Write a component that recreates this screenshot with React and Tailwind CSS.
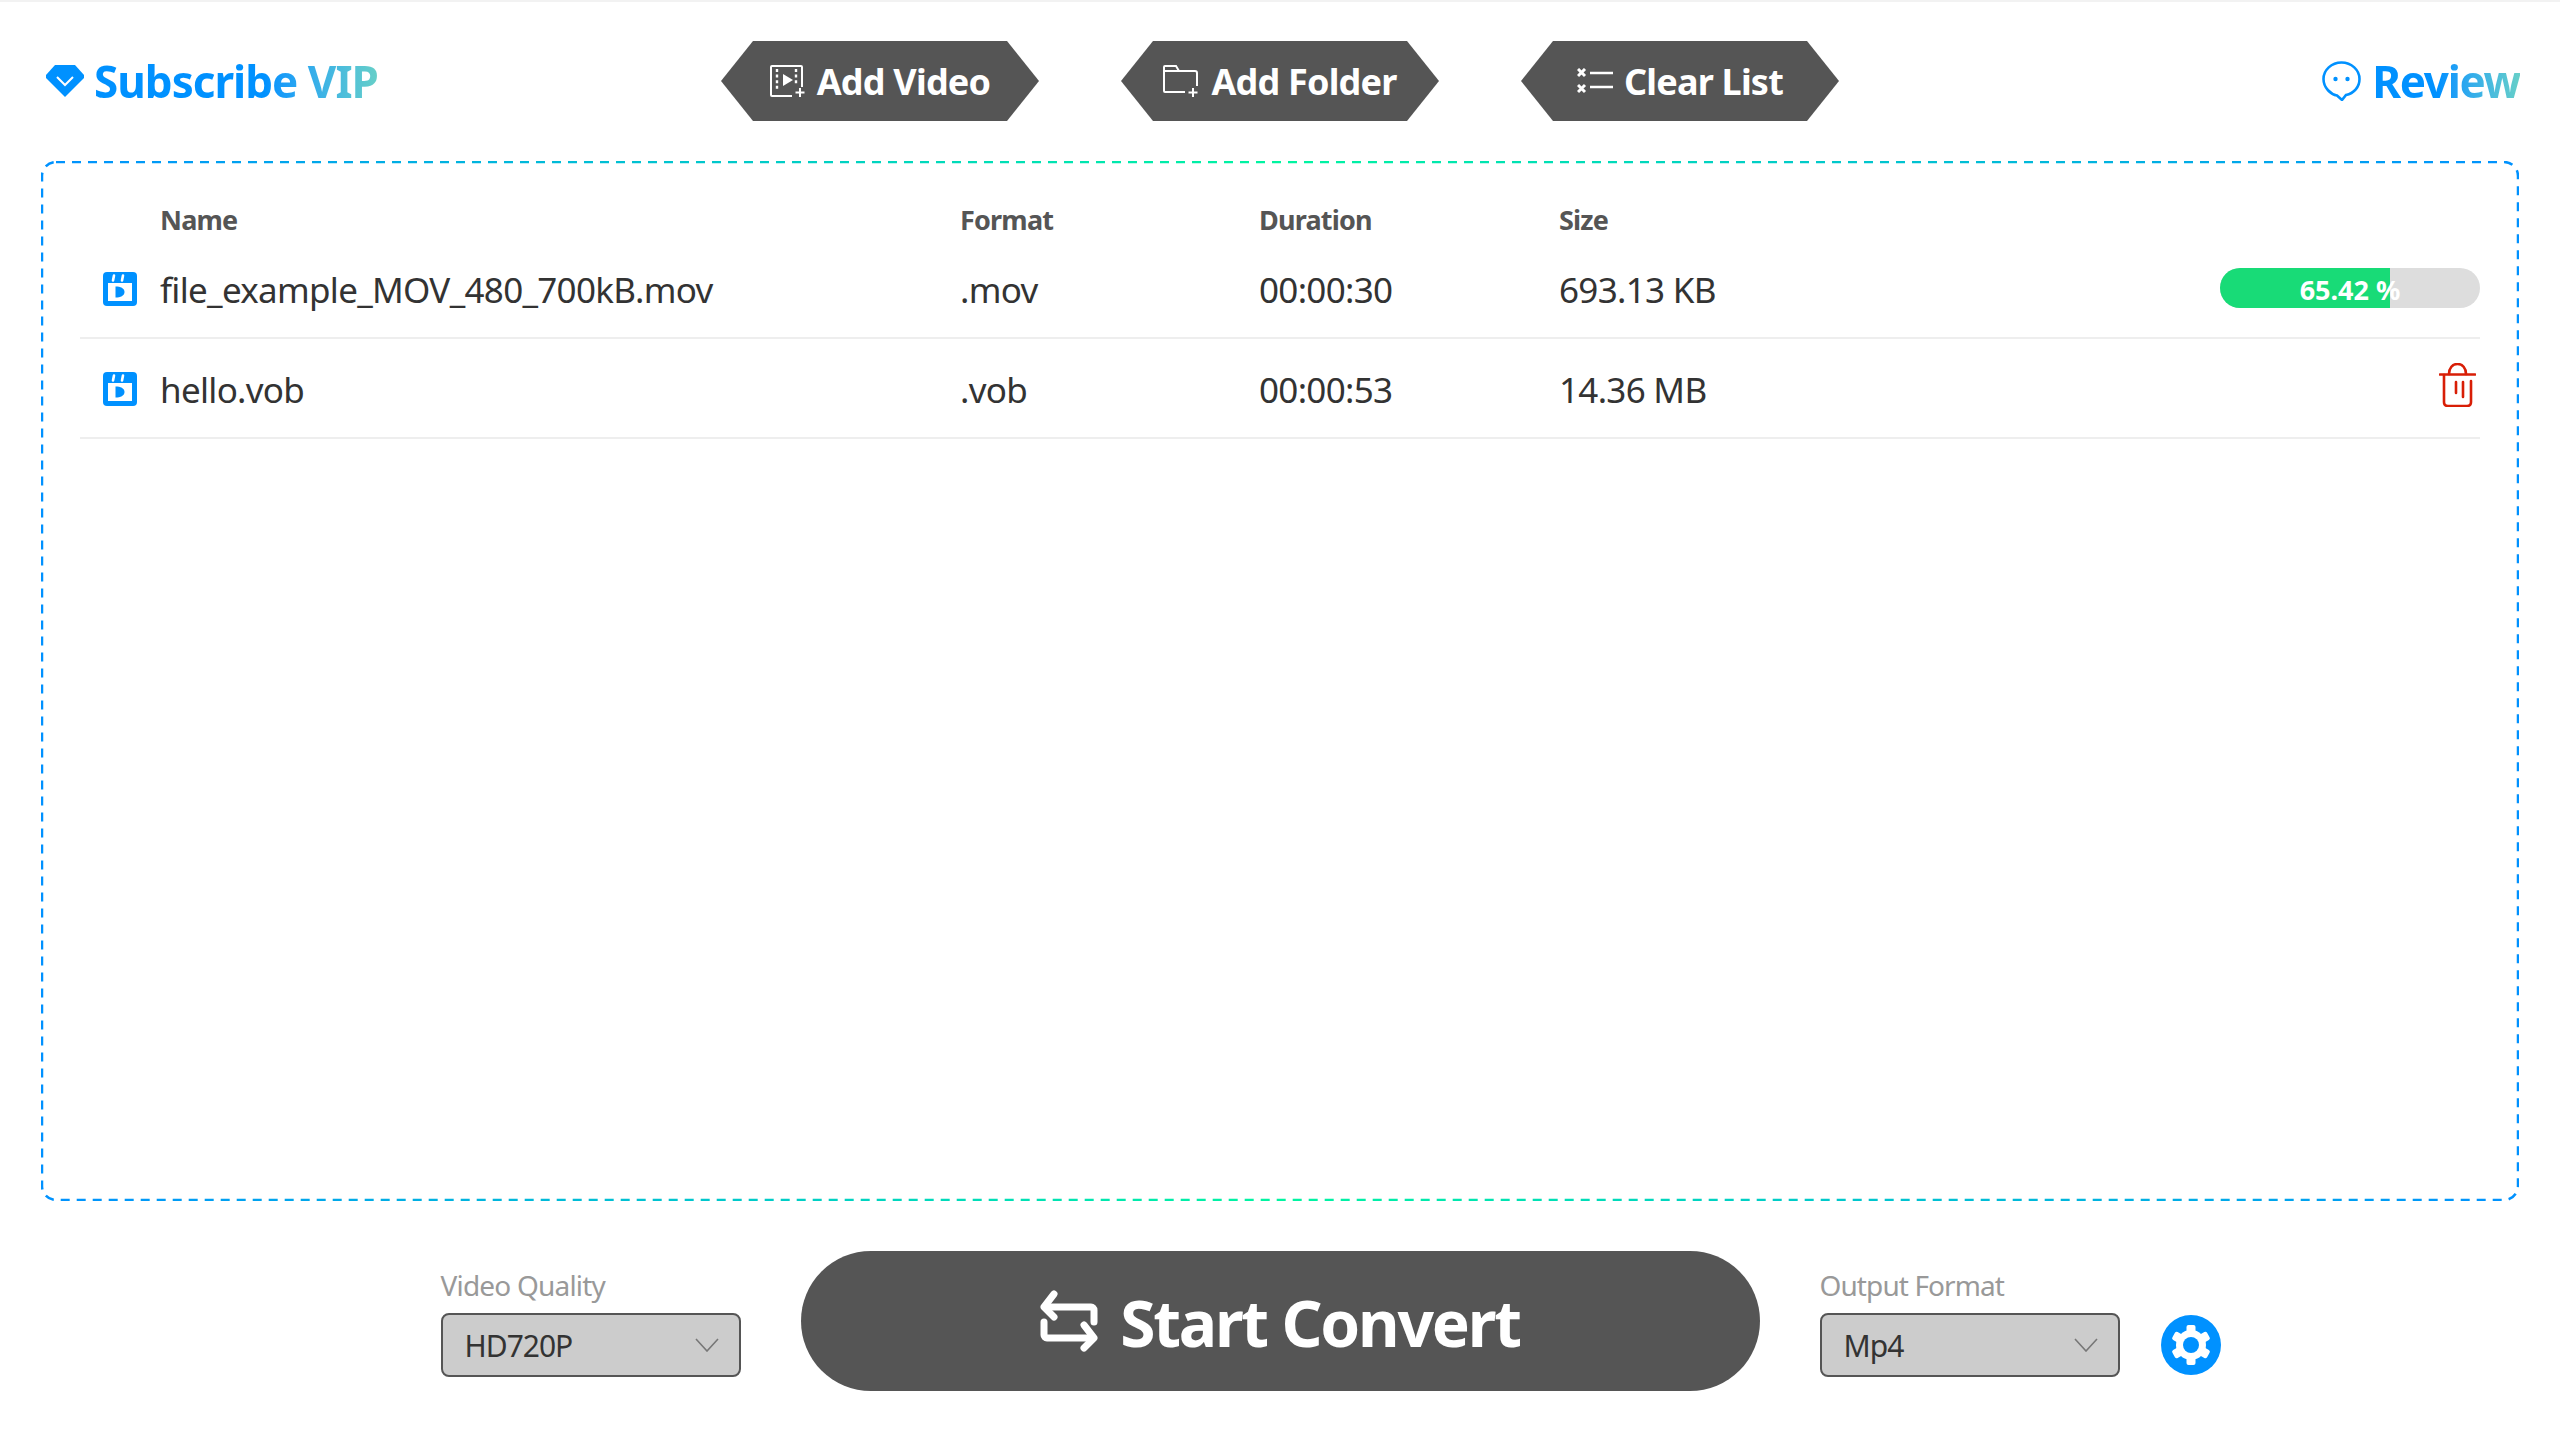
const FONT = "font-['Noto_Sans','Open_Sans',sans-serif]";

const HEX = "[clip-path:polygon(32px_0,286px_0,318px_50%,286px_100%,32px_100%,0_50%)]";

function VideoIcon() {
  return (
    <svg width="36" height="32" viewBox="0 0 36 32" fill="none" stroke="white" strokeWidth="2">
      <path d="M32 22V2a1 1 0 0 0-1-1H2a1 1 0 0 0-1 1v28a1 1 0 0 0 1 1h20" />
      <path d="M7 4v22M26 4v16" strokeDasharray="3 2.6" strokeWidth="2.4" />
      <path d="M13 9l10 6-10 6z" fill="white" stroke="none" />
      <path d="M30 23v9M25.5 27.5h9" />
    </svg>
  );
}

function FolderIcon() {
  return (
    <svg width="36" height="32" viewBox="0 0 36 32" fill="none" stroke="white" strokeWidth="2">
      <path d="M22 27H2a1 1 0 0 1-1-1V2a1 1 0 0 1 1-1h11l3 5h16a2 2 0 0 1 2 2v13" />
      <path d="M1 6h15" />
      <path d="M30 23v9M25.5 27.5h9" />
    </svg>
  );
}

function ClearIcon() {
  return (
    <svg width="36" height="26" viewBox="0 0 36 26" fill="none" stroke="white">
      <path d="M1 1l7 7M8 1l-7 7M1 17l7 7M8 17l-7 7" strokeWidth="3" />
      <path d="M13 5h23M13 19h23" strokeWidth="2.6" />
    </svg>
  );
}

function HexButton({ icon, label, gap }) {
  return (
    <button className={`w-[318px] h-20 flex items-center justify-center bg-[#555555] text-white text-[36px] font-bold tracking-[-0.8px] ${gap} ${HEX}`}>
      {icon}
      <span className="pt-[2px]">{label}</span>
    </button>
  );
}

function FileIcon() {
  return (
    <svg width="34" height="34" viewBox="0 0 34 34" className="ml-[23px] mt-[2px]">
      <rect width="34" height="34" rx="4" fill="#0091ff" />
      <rect x="5" y="11" width="24" height="18" fill="white" />
      <path d="M11 3.5l-1 5M20 3.5l-1 5" stroke="white" strokeWidth="2.6" strokeLinecap="round" />
      <path d="M12.5 14.5c5 0 9 1.8 9 5.5s-4 5.500-9 5.500z" fill="#0091ff" />
    </svg>
  );
}

function TrashIcon() {
  return (
    <svg width="37" height="44" viewBox="0 0 37 44" fill="none" stroke="#d81e06" strokeWidth="2.6" strokeLinecap="round" className="mr-1 mb-[6px]">
      <path d="M1 11.500h35" />
      <path d="M10 11c0-6 3.500-10 8.500-10S27 5 27 11" />
      <path d="M5 12v27c0 2.500 1.500 4 4 4h19c2.500 0 4-1.500 4-4V18" />
      <path d="M17 19v11M24 19v15" />
    </svg>
  );
}

function Chevron() {
  return (
    <svg width="24" height="14" viewBox="0 0 24 14" fill="none" stroke="#777777" strokeWidth="1.6">
      <path d="M1 1l11 12L23 1" />
    </svg>
  );
}

function Select({ value }) {
  return (
    <div className="w-[300px] h-16 pl-[22px] pr-5 flex items-center justify-between rounded-lg border-2 border-[#555555] bg-[#cccccc] text-[#333333] text-[30px] tracking-[-1px]">
      <span>{value}</span>
      <Chevron />
    </div>
  );
}

function Row({ name, format, duration, size, children }) {
  return (
    <div className="h-[100px] grid grid-cols-[80px_800px_299px_300px_1fr] items-center border-b-2 border-[#eeeeee] text-[#333333] text-[35px] tracking-[-0.7px] leading-none">
      <FileIcon />
      <span className="pt-[2px]">{name}</span>
      <span className="pt-[2px]">{format}</span>
      <span className="pt-[2px]">{duration}</span>
      <div className="flex items-center justify-between">
        <span className="pt-[2px]">{size}</span>
        {children}
      </div>
    </div>
  );
}

function DashedFrame() {
  return (
    <svg width="2478" height="1040" className="absolute inset-0 pointer-events-none">
      <defs>
        <linearGradient id="frame" gradientUnits="userSpaceOnUse" x1="0" y1="0" x2="2478" y2="0">
          <stop offset="0" stopColor="#0091ff" />
          <stop offset="0.5" stopColor="#00f5a0" />
          <stop offset="1" stopColor="#0091ff" />
        </linearGradient>
      </defs>
      <rect x="1" y="1" width="2476" height="1038" rx="14" fill="none" stroke="url(#frame)" strokeWidth="2.5" strokeDasharray="9 7" />
    </svg>
  );
}

export default function App() {
  return (
    <div className={`w-[2560px] h-[1439px] bg-white overflow-hidden ${FONT}`}>
      <div className="h-[2px] bg-[#f2f2f2]" />

      {/* Header */}
      <header className="mt-[39px] h-20 grid grid-cols-[1fr_auto_1fr] items-center px-[40px]">
        <div className="ml-[6px] flex items-center gap-[10px]">
          <svg width="38" height="32" viewBox="0 0 38 32">
            <path d="M9 0h20l9 10v3L19 32 0 13v-3z" fill="#0091ff" />
            <path d="M11 12l8 8 8-8" fill="none" stroke="white" strokeWidth="2" />
          </svg>
          <span className="text-[44px] font-bold tracking-[-1px] bg-linear-to-r from-[#0091ff] via-[#0091ff] via-60% to-[#66cfc8] bg-clip-text text-transparent">
            Subscribe VIP
          </span>
        </div>

        <div className="flex gap-[82px]">
          <HexButton icon={<VideoIcon />} label="Add Video" gap="gap-[11px]" />
          <HexButton icon={<FolderIcon />} label="Add Folder" gap="gap-[12px]" />
          <HexButton icon={<ClearIcon />} label="Clear List" gap="gap-[11px]" />
        </div>

        <div className="flex items-center justify-end gap-[11px]">
          <svg width="39" height="40" viewBox="0 0 39 40" fill="none">
            <path d="M19.500 1.500C9.500 1.500 1.500 9 1.500 18c0 9 7.500 15.500 13.500 16.500l5 4.500 4-5c8-1.500 13.500-8 13.500-16 0-9-8-16.500-18-16.500z" stroke="#0091ff" strokeWidth="2.6" />
            <circle cx="13.500" cy="18" r="2.200" fill="#0091ff" />
            <circle cx="25.500" cy="18" r="2.200" fill="#0091ff" />
          </svg>
          <span className="text-[44px] font-bold tracking-[-1.3px] bg-linear-to-r from-[#0091ff] via-[#0091ff] via-45% to-[#66cfc8] bg-clip-text text-transparent">
            Review
          </span>
        </div>
      </header>

      {/* File list */}
      <main className="relative mt-[40px] mx-[41px] w-[2478px] h-[1040px] px-[39px] pt-[39px]">
        <DashedFrame />
        <div className="h-[39px] grid grid-cols-[80px_800px_299px_300px_1fr] items-center text-[#555555] text-[27px] font-bold tracking-[-0.8px]">
          <span />
          <span>Name</span>
          <span>Format</span>
          <span>Duration</span>
          <span>Size</span>
        </div>
        <Row name="file_example_MOV_480_700kB.mov" format=".mov" duration="00:00:30" size="693.13 KB">
          <div className="relative w-[260px] h-10 rounded-full bg-[#dddddd] overflow-hidden">
            <div className="h-full w-[65.42%] bg-[#18db77]" />
            <span className="absolute inset-0 pt-[2px] flex items-center justify-center text-white text-[27px] font-bold tracking-[0px]">
              65.42 %
            </span>
          </div>
        </Row>
        <Row name="hello.vob" format=".vob" duration="00:00:53" size="14.36 MB">
          <TrashIcon />
        </Row>
      </main>

      {/* Bottom controls */}
      <footer className="mt-[50px] grid grid-cols-[1fr_959px_1fr] gap-x-[60px]">
        <div className="flex flex-col items-end justify-end pb-[14px]">
          <div className="w-[300px]">
            <div className="mb-[8px] text-[28px] leading-[40px] text-[#999999] tracking-[-0.8px]">Video Quality</div>
            <Select value="HD720P" />
          </div>
        </div>

        <button className="h-[140px] rounded-full bg-[#555555] flex items-center justify-center gap-[22px] text-white text-[64px] font-bold tracking-[-2.2px]">
          <svg width="58" height="62" viewBox="0 0 58 62" fill="none" stroke="white" strokeWidth="7" strokeLinecap="round" strokeLinejoin="round">
            <path d="M14 4L4 17l10 10" />
            <path d="M5 17h46a3 3 0 0 1 3 3v12" />
            <path d="M44 35l10 13-10 10" />
            <path d="M53 48H7a3 3 0 0 1-3-3V32" />
          </svg>
          <span className="pt-[4px]">Start Convert</span>
        </button>

        <div className="flex flex-col justify-end pb-[14px]">
          <div className="mb-[8px] text-[28px] leading-[40px] text-[#999999] tracking-[-0.9px]">Output Format</div>
          <div className="flex items-center gap-[41px]">
            <Select value="Mp4" />
            <svg width="60" height="60" viewBox="0 0 60 60">
              <circle cx="30" cy="30" r="30" fill="#0091ff" />
              <g fill="white">
                <rect x="25.500" y="10" width="9" height="40" rx="2" />
                <rect x="25.500" y="10" width="9" height="40" rx="2" transform="rotate(60 30 30)" />
                <rect x="25.500" y="10" width="9" height="40" rx="2" transform="rotate(120 30 30)" />
                <circle cx="30" cy="30" r="15" />
              </g>
              <circle cx="30" cy="30" r="8" fill="#0091ff" />
            </svg>
          </div>
        </div>
      </footer>
    </div>
  );
}
